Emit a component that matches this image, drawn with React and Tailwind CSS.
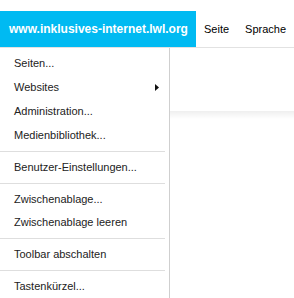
import { Fragment } from 'react'

const groups = [
  [
    { label: 'Seiten...' },
    { label: 'Websites', submenu: true },
    { label: 'Administration...' },
    { label: 'Medienbibliothek...' }
  ],
  [{ label: 'Benutzer-Einstellungen...' }],
  [{ label: 'Zwischenablage...' }, { label: 'Zwischenablage leeren' }],
  [{ label: 'Toolbar abschalten' }],
  [{ label: 'Tastenkürzel...' }]
]

const App = () => {
  return (
    <div className="w-[294px] h-[298px] bg-white overflow-hidden font-['Liberation_Sans',Arial,sans-serif] text-[#222]">
      <div className="h-[11px]" />
      <div className="flex h-[37px] border-b border-[#e2e2e2]">
        <div className="w-[196px] h-[36px] bg-[#00baf2] text-white font-bold text-[12px] flex items-center pl-[9px] shrink-0 whitespace-nowrap">
          www.inklusives-internet.lwl.org
        </div>
        <div className="flex items-center h-[36px] text-[11px] text-black whitespace-nowrap">
          <span className="px-2">Seite</span>
          <span className="px-2">Sprache</span>
        </div>
      </div>

      <div className="flex h-[250px]">
        <div className="w-[170px] shrink-0 border-r border-[#cfcfcf] pt-[3px] text-[11px]">
          {groups.map((group, gi) => (
            <Fragment key={gi}>
              {gi > 0 && <div className="h-px bg-[#dedede] my-[4px] mr-[4px]" />}
              {group.map((item) => (
                <div
                  key={item.label}
                  className={`${gi === 0 ? 'h-6' : 'h-[23px]'} flex items-center pl-[14px] pr-[10px] justify-between`}
                >
                  <span>{item.label}</span>
                  {item.submenu && (
                    <svg width="4" height="7" viewBox="0 0 4 7">
                      <path d="M0 0 L4 3.5 L0 7 Z" fill="#111" />
                    </svg>
                  )}
                </div>
              ))}
            </Fragment>
          ))}
        </div>
        <div className="flex-1">
          <div className="h-[63px]" />
          <div className="h-[8px] bg-gradient-to-b from-[#efefef] to-white" />
        </div>
      </div>
    </div>
  )
}

export default App
